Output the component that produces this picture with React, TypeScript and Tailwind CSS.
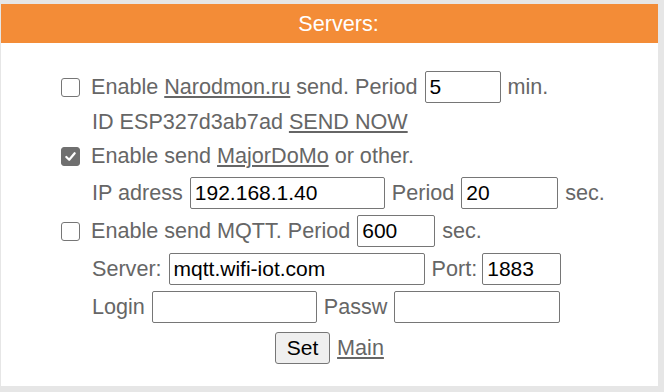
import type { ReactNode } from "react";

const Box = ({ checked }: { checked?: boolean }) => (
  <span
    className={
      checked
        ? "flex items-center justify-center w-[19px] h-[19px] rounded-[3px] bg-[#6f6f6f] border border-[#6f6f6f]"
        : "block w-[19px] h-[19px] rounded-[3px] bg-white border border-[#767676]"
    }
  >
    {checked && (
      <svg width="13" height="13" viewBox="0 0 14 14">
        <path d="M2.5 7.5 L5.6 10.5 L11.5 3.5" fill="none" stroke="white" strokeWidth="2.4" strokeLinecap="round" strokeLinejoin="round" />
      </svg>
    )}
  </span>
);

const Field = ({ w, value = "" }: { w: string; value?: string }) => (
  <input
    readOnly
    value={value}
    className={`${w} h-[32px] border border-[#767676] rounded-[2px] px-[4px] text-black text-[21px] outline-none bg-white`}
    style={{ fontFamily: '"Liberation Sans", Arial, sans-serif' }}
  />
);

const Row = ({ h, indent = true, children }: { h: string; indent?: boolean; children: ReactNode }) => (
  <div className={`flex items-center gap-[7px] ${h} ${indent ? "pl-[31px]" : ""}`}>{children}</div>
);

const A = ({ children }: { children: ReactNode }) => (
  <a href="#" className="underline underline-offset-[2px] decoration-[1.5px] text-[#666]">
    {children}
  </a>
);

export default function App() {
  return (
    <div
      className="min-h-screen bg-[#e6e6e6] pt-[4px] text-[#666] text-[21.6px] leading-none"
      style={{ fontFamily: '"Liberation Sans", Arial, sans-serif' }}
    >
      <div className="ml-[1px] w-[657px] bg-white">
        <div className="h-[39px] bg-[#f38c37] text-white flex items-center justify-center pl-[18px]">
          Servers:
        </div>

        <div className="pl-[60px] pt-[25px] pb-[17px] flex flex-col">
          <Row h="h-[38px]" indent={false}>
            <Box />
            <span className="ml-[4px]">
              Enable <A>Narodmon.ru</A> send. Period
            </span>
            <Field w="w-[76px]" value="5" />
            <span>min.</span>
          </Row>

          <Row h="h-[32px]">
            <span>
              ID ESP327d3ab7ad <A>SEND NOW</A>
            </span>
          </Row>

          <Row h="h-[36px]" indent={false}>
            <Box checked />
            <span className="ml-[4px]">
              Enable send <A>MajorDoMo</A> or other.
            </span>
          </Row>

          <Row h="h-[38px]">
            <span>IP adress</span>
            <Field w="w-[195px]" value="192.168.1.40" />
            <span>Period</span>
            <Field w="w-[97px]" value="20" />
            <span>sec.</span>
          </Row>

          <Row h="h-[38px]" indent={false}>
            <Box />
            <span className="ml-[4px]">Enable send MQTT. Period</span>
            <Field w="w-[78px]" value="600" />
            <span>sec.</span>
          </Row>

          <Row h="h-[38px]">
            <span>Server:</span>
            <Field w="w-[256px]" value="mqtt.wifi-iot.com" />
            <span className="-mr-[2px]">Port:</span>
            <Field w="w-[79px]" value="1883" />
          </Row>

          <Row h="h-[38px]">
            <span>Login</span>
            <Field w="w-[165px]" />
            <span>Passw</span>
            <Field w="w-[166px]" />
          </Row>

          <div className="h-[43px] flex items-center justify-center gap-[7px] -ml-[60px]">
            <button className="w-[55px] h-[32px] bg-[#efefef] border border-[#767676] rounded-[3px] text-black text-[21px]">
              Set
            </button>
            <A>Main</A>
          </div>
        </div>
      </div>
    </div>
  );
}
